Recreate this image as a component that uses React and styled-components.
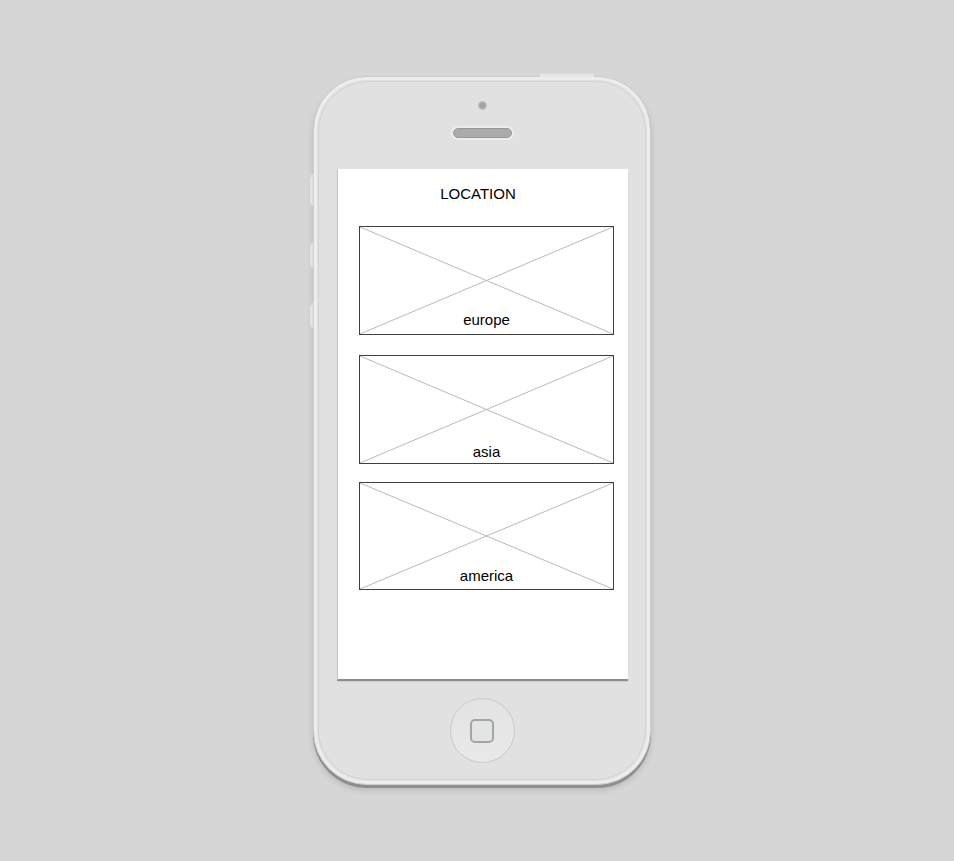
import React from "react";
import styled, { createGlobalStyle } from "styled-components";

const GlobalStyle = createGlobalStyle`
	html, body {
		margin: 0;
		background: #d6d6d6;
		font-family: "Liberation Sans", Arial, sans-serif;
	}
`;

const Stage = styled.div`
	width: 954px;
	height: 861px;
	box-sizing: border-box;
	padding: 76px 0 0 313px;
	overflow: hidden;
`;

const Phone = styled.div`
	position: relative;
	width: 338px;
	height: 709px;
	box-sizing: border-box;
	border-radius: 54px;
	background: #e1e1e1;
	border: 1px solid #cdcdcd;
	box-shadow: inset 0 0 0 3px #ededed, 0 3px 0 #8e8e8e, 0 5px 6px rgba(0, 0, 0, 0.14);
	display: flex;
	flex-direction: column;
	align-items: center;
	padding-top: 24px;
	&::before {
		content: "";
		position: absolute;
		inset: 4px;
		border-radius: 50px;
		border: 1px solid #d3d3d3;
		pointer-events: none;
	}
`;

/* hardware keys sit outside the body edge */
const SideKey = styled.div`
	position: absolute;
	left: -5px;
	top: ${({ $top }) => $top}px;
	width: 5px;
	height: ${({ $h }) => $h}px;
	border-radius: 2px 0 0 2px;
	background: #d9d9d9;
	box-shadow: inset 1px 0 0 #cfcfcf;
	&::after {
		content: "";
		position: absolute;
		left: 1px;
		top: 3px;
		bottom: 3px;
		width: 2px;
		background: #e4e4e4;
	}
`;

const TopKey = styled.div`
	position: absolute;
	top: -4px;
	left: 226px;
	width: 54px;
	height: 4px;
	border-radius: 2px 2px 0 0;
	background: #e6e6e6;
	box-shadow: inset 0 1px 0 #dadada;
`;

const Camera = styled.div`
	width: 9px;
	height: 9px;
	border-radius: 50%;
	background: radial-gradient(circle, #a3a3a3 0 35%, #c4c4c4 70%, #dcdcdc 100%);
`;

const Speaker = styled.div`
	margin-top: 18px;
	width: 59px;
	height: 10px;
	box-sizing: border-box;
	border-radius: 5px;
	background: #ababab;
	border: 1px solid #979797;
	box-shadow: 0 0 0 2px #ececec;
`;

const Screen = styled.div`
	margin-top: 31px;
	margin-left: 1px;
	width: 291px;
	height: 512px;
	box-sizing: border-box;
	background: #ffffff;
	border-left: 1px solid #c6c6c6;
	border-bottom: 2px solid #8c8c8c;
	box-shadow: 0 1px 1px rgba(0, 0, 0, 0.08);
	padding: 16px 14px 0 21px;
	display: flex;
	flex-direction: column;
`;

const Title = styled.div`
	font-size: 15px;
	line-height: 18px;
	color: #000000;
	text-align: center;
	padding-right: 17px;
	margin-bottom: 23px;
`;

const Card = styled.div`
	position: relative;
	width: 255px;
	height: ${({ $h }) => $h}px;
	margin-top: ${({ $mt }) => $mt}px;
	box-sizing: border-box;
	border: 1px solid #3f3f3f;
	background: #ffffff;
`;

const Cross = styled.svg`
	display: block;
	width: 100%;
	height: 100%;
`;

const Label = styled.span`
	position: absolute;
	left: 0;
	right: 0;
	bottom: ${({ $bottom }) => $bottom}px;
	text-align: center;
	font-size: 15px;
	line-height: 18px;
	color: #000000;
`;

const HomeButton = styled.div`
	margin-top: 17px;
	width: 65px;
	height: 65px;
	box-sizing: border-box;
	border-radius: 50%;
	border: 1px solid #c9c9c9;
	background: linear-gradient(180deg, #e3e3e3, #e9e9e9);
	display: flex;
	align-items: center;
	justify-content: center;
`;

const HomeSquare = styled.div`
	width: 24px;
	height: 24px;
	box-sizing: border-box;
	border-radius: 5px;
	border: 2px solid #a0a7ab;
	background: #e4e4e4;
`;

const places = [
	{ name: "europe", h: 109, mt: 0, bottom: 5 },
	{ name: "asia", h: 109, mt: 20, bottom: 2 },
	{ name: "america", h: 108, mt: 18, bottom: 4 },
];

const Placeholder = () => (
	<Cross viewBox="0 0 100 100" preserveAspectRatio="none">
		<line x1="0" y1="0" x2="100" y2="100" stroke="#b9b9b9" strokeWidth="1" vectorEffect="non-scaling-stroke" />
		<line x1="100" y1="0" x2="0" y2="100" stroke="#b9b9b9" strokeWidth="1" vectorEffect="non-scaling-stroke" />
	</Cross>
);

const App = () => (
	<>
		<GlobalStyle />
		<Stage>
			<Phone>
				<TopKey />
				<SideKey $top={97} $h={32} />
				<SideKey $top={166} $h={25} />
				<SideKey $top={226} $h={25} />
				<Camera />
				<Speaker />
				<Screen>
					<Title>LOCATION</Title>
					{places.map(({ name, h, mt, bottom }) => (
						<Card key={name} $h={h} $mt={mt}>
							<Placeholder />
							<Label $bottom={bottom}>{name}</Label>
						</Card>
					))}
				</Screen>
				<HomeButton>
					<HomeSquare />
				</HomeButton>
			</Phone>
		</Stage>
	</>
);

export default App;
